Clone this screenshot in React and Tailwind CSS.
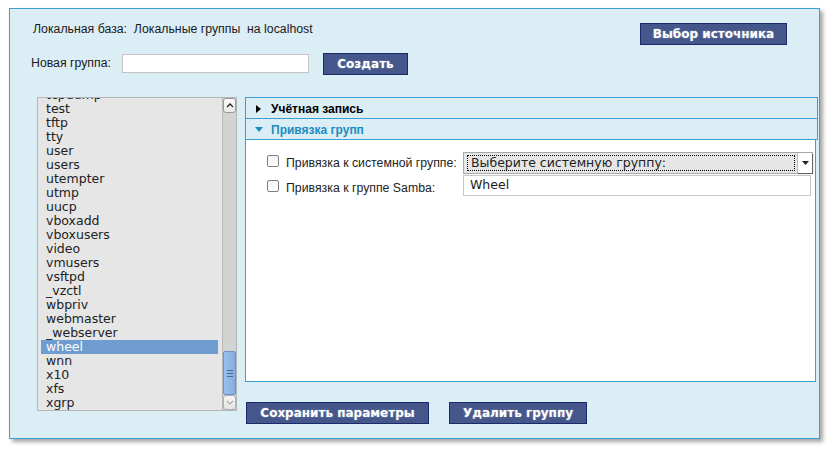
import React from 'react';

const groups = [
  'tcpdump', 'test', 'tftp', 'tty', 'user', 'users', 'utempter', 'utmp', 'uucp',
  'vboxadd', 'vboxusers', 'video', 'vmusers', 'vsftpd', '_vzctl', 'wbpriv',
  'webmaster', '_webserver', 'wheel', 'wnn', 'x10', 'xfs', 'xgrp',
];

const label = { fontFamily: '"Liberation Sans", Arial, sans-serif' };

const Button = ({ children, className = '' }) => (
  <button
    className={`h-[22px] bg-[#45578a] border border-[#1b2a6b] text-white font-bold text-[12px] leading-none [font-family:'DejaVu_Sans',sans-serif] [text-shadow:0_0_2px_rgba(255,255,255,0.35)] ${className}`}
  >
    {children}
  </button>
);

const Checkbox = () => (
  <div className="w-[12px] h-[12px] border border-[#7f7f7f] rounded-[2px] bg-gradient-to-b from-[#f4f4f4] to-[#ffffff] shrink-0" />
);

const App = () => {
  return (
    <div className="w-[833px] h-[454px] bg-white pt-[8px] pl-[9px]">
      <div className="w-[811px] h-[431px] bg-[#dbedf5] border border-[#3aa0d2] shadow-[3px_3px_4px_rgba(0,0,0,0.35)] pt-[14px] text-[#1a1a1a]">
        {/* header row */}
        <div className="flex items-start h-[22px]">
          <div className="ml-[23px] -mt-[1px] text-[12.3px] leading-[14px]" style={label}>
            Локальная база:&nbsp; Локальные группы&nbsp; на localhost
          </div>
          <Button className="ml-auto mr-[32px] w-[147px]">Выбор источника</Button>
        </div>

        {/* new group row */}
        <div className="flex items-center mt-[8px] h-[21px]">
          <div className="ml-[21px] w-[91px] text-[12.3px]" style={label}>Новая группа:</div>
          <div className="w-[187px] h-[19px] bg-white border border-[#c4c4c4]" />
          <Button className="ml-[14px] w-[85px] h-[21px]">Создать</Button>
        </div>

        {/* main area */}
        <div className="flex mt-[23px] ml-[27px]">
          {/* list box */}
          <div className="w-[200px] h-[314px] border border-[#b4b4b4] bg-[#e6e6e6] flex overflow-hidden">
            <div className="flex-1 overflow-hidden">
              <div className="-mt-[10px] text-[12.5px] leading-[14px] text-[#222] [font-family:'DejaVu_Sans',sans-serif]">
                {groups.map((g) =>
                  g === 'wheel' ? (
                    <div key={g} className="ml-[3px] mr-[4px] pl-[5px] bg-[#709dd0] text-white h-[14px]">
                      {g}
                    </div>
                  ) : (
                    <div key={g} className="pl-[8px] h-[14px]">
                      {g}
                    </div>
                  )
                )}
              </div>
            </div>
            {/* scrollbar */}
            <div className="w-[14px] bg-[#d3d3d3] border-l border-[#b8b8b8] flex flex-col">
              <div className="h-[15px] bg-gradient-to-b from-white to-[#e8e8e8] border border-[#9a9a9a] rounded-[3px] flex items-center justify-center">
                <svg width="8" height="5" viewBox="0 0 8 5">
                  <path d="M1 4 L4 1 L7 4" stroke="#222" strokeWidth="1.3" fill="none" />
                </svg>
              </div>
              <div className="flex-1 flex flex-col justify-end">
                <div className="h-[44px] bg-gradient-to-r from-[#9cc0ec] to-[#84ace0] border border-[#6f93c4] rounded-[2px] flex flex-col items-center justify-center gap-[2px]">
                  <div className="w-[6px] h-px bg-[#4a6a9c]" />
                  <div className="w-[6px] h-px bg-[#4a6a9c]" />
                  <div className="w-[6px] h-px bg-[#4a6a9c]" />
                </div>
              </div>
              <div className="h-[15px] bg-gradient-to-b from-[#f6f6f6] to-[#e4e4e4] border border-[#b0b0b0] rounded-[3px] flex items-center justify-center">
                <svg width="8" height="5" viewBox="0 0 8 5">
                  <path d="M1 1 L4 4 L7 1" stroke="#aaa" strokeWidth="1.2" fill="none" />
                </svg>
              </div>
            </div>
          </div>

          {/* right column */}
          <div className="ml-[8px] w-[573px]">
            <div className="border border-[#3aa0d2] border-b-0">
              <div className="h-[21px] flex items-center border-b border-[#3aa0d2] pt-px">
                <span className="ml-[10px] w-[15px] flex items-center">
                  <svg width="5" height="8" viewBox="0 0 5 8">
                    <path d="M0 0 L5 4 L0 8 Z" fill="#000" />
                  </svg>
                </span>
                <span className="text-[12px] font-bold text-black" style={label}>Учётная запись</span>
              </div>
              <div className="h-[21px] flex items-center border-b border-[#3aa0d2] pt-px">
                <span className="ml-[9px] w-[16px] flex items-center">
                  <svg width="8" height="5" viewBox="0 0 8 5">
                    <path d="M0 0 L8 0 L4 5 Z" fill="#1b8cc2" />
                  </svg>
                </span>
                <span className="text-[12px] font-bold text-[#1b8cc2]" style={label}>Привязка групп</span>
              </div>
            </div>
            <div className="h-[242px] mr-[2px] bg-white border border-t-0 border-[#3aa0d2] pt-[12px]">
              <div className="flex items-center h-[22px]">
                <div className="ml-[21px] -mt-[5px]"><Checkbox /></div>
                <div className="ml-[7px] w-[177px] text-[12.3px] text-[#222] mt-[1px]" style={label}>
                  Привязка к системной группе:
                </div>
                <div className="w-[350px] h-[22px] bg-[#e6e6e6] border border-[#a8a8a8] flex items-center shrink-0">
                  <div className="flex-1 h-[16px] ml-[3px] mr-[2px] border border-dotted border-black flex items-center text-[12.5px] text-[#222] [font-family:'DejaVu_Sans',sans-serif] pl-[3px]">
                    Выберите системную группу:
                  </div>
                  <div className="w-[15px] h-[20px] bg-white border-l border-[#bbb] shadow-[1px_1px_1px_rgba(0,0,0,0.4)] flex items-center justify-center">
                    <svg width="7" height="4" viewBox="0 0 7 4">
                      <path d="M0 0 H7 L3.5 4 Z" fill="#222" />
                    </svg>
                  </div>
                </div>
              </div>
              <div className="flex items-center h-[21px] mt-[1px]">
                <div className="ml-[21px]"><Checkbox /></div>
                <div className="ml-[7px] w-[177px] text-[12.3px] text-[#222] mt-[5px]" style={label}>
                  Привязка к группе Samba:
                </div>
                <div className="w-[348px] h-[21px] bg-white border border-[#c8c8c8] flex items-center pl-[6px] text-[12.5px] text-[#222] [font-family:'DejaVu_Sans',sans-serif] shrink-0">
                  Wheel
                </div>
              </div>
            </div>
            <div className="flex gap-[20px] mt-[20px] ml-[1px]">
              <Button className="w-[183px]">Сохранить параметры</Button>
              <Button className="w-[138px]">Удалить группу</Button>
            </div>
          </div>
        </div>
      </div>
    </div>
  );
};

export default App;
